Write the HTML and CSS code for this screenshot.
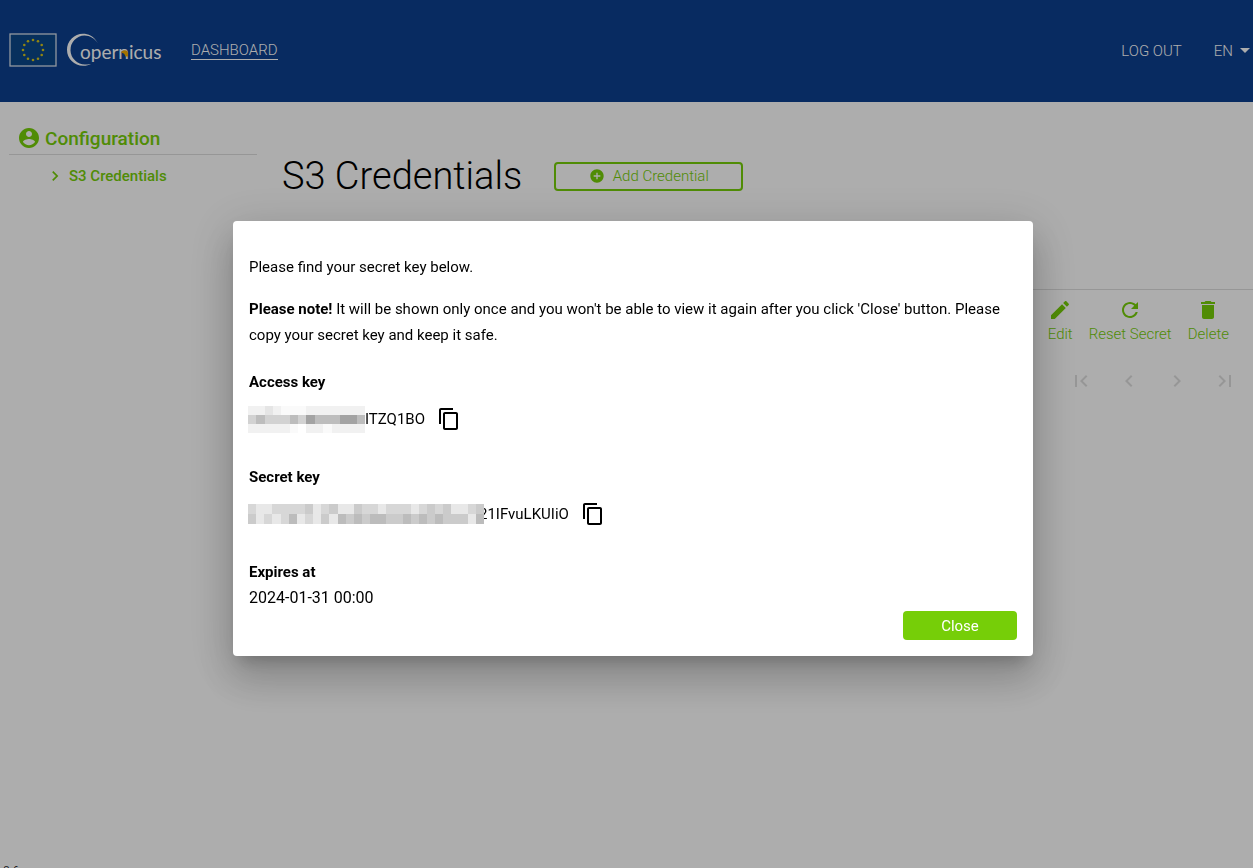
FILE: index.html
```html
<!DOCTYPE html>
<html lang="en">
<head>
<meta charset="utf-8">
<title>S3 Credentials</title>
<link rel="stylesheet" href="styles.css">
</head>
<body>
<header class="topbar">
  <a class="brand" href="#" aria-label="Copernicus home">
    <svg width="48" height="34" viewBox="0 0 48 34" aria-hidden="true">
      <rect x="1" y="1" width="46" height="32" fill="#0b4789" stroke="#d8e0ec" stroke-width="1.3"/>
      <g fill="#d6c51c">
        <circle cx="24" cy="7" r="1.3"/><circle cx="29" cy="8.300" r="1.3"/><circle cx="32.700" cy="12" r="1.3"/>
        <circle cx="34" cy="17" r="1.3"/><circle cx="32.700" cy="22" r="1.3"/><circle cx="29" cy="25.700" r="1.3"/>
        <circle cx="24" cy="27" r="1.3"/><circle cx="19" cy="25.700" r="1.3"/><circle cx="15.300" cy="22" r="1.3"/>
        <circle cx="14" cy="17" r="1.3"/><circle cx="15.300" cy="12" r="1.3"/><circle cx="19" cy="8.300" r="1.3"/>
      </g>
    </svg>
    <svg width="96" height="34" viewBox="0 0 96 34" aria-hidden="true">
      <path d="M31 10.500C27 3 21 .800 16 .800A16 16 0 0 0 16 32.800C19.500 32.800 22 32.200 24 31C22.500 31.400 20.500 31.600 18.500 31.400A14.500 14.500 0 0 1 17.500 2.400C23 2.400 28 5.500 31 10.500Z" fill="#fff"/>
      <text class="brand-text" x="13" y="26">opernicus</text>
      <path d="M54 19.500C56 16.500 61 16.500 61 20.500V23.500H58.500C58 21 56.500 20 54 19.500Z" fill="#f0a800"/>
    </svg>
  </a>
  <nav class="nav">
    <a class="nav-link current" href="#">DASHBOARD</a>
    <a class="nav-link logout" href="#">LOG OUT</a>
    <button class="language" type="button">EN<span class="caret"></span></button>
  </nav>
</header>

<div class="page">
  <aside class="sidebar">
    <h2 class="side-title">
      <svg class="icon" viewBox="0 0 24 24" aria-hidden="true"><path d="M12 2C6.480 2 2 6.480 2 12s4.480 10 10 10 10-4.480 10-10S17.520 2 12 2zm0 3c1.660 0 3 1.340 3 3s-1.340 3-3 3-3-1.340-3-3 1.340-3 3-3zm0 14.200c-2.500 0-4.710-1.280-6-3.220.030-1.990 4-3.080 6-3.080 1.990 0 5.970 1.090 6 3.080-1.290 1.940-3.500 3.220-6 3.220z"/></svg>
      Configuration
    </h2>
    <a class="side-link" href="#">
      <svg class="icon-chevron" viewBox="0 0 24 24" aria-hidden="true"><path d="M10 6L8.590 7.410 13.170 12l-4.580 4.590L10 18l6-6z"/></svg>
      S3 Credentials
    </a>
  </aside>
  <main class="content">
    <div class="heading">
      <h1 class="title">S3 Credentials</h1>
      <button class="add" type="button">
        <svg class="icon-small" viewBox="0 0 24 24" aria-hidden="true"><path d="M12 2C6.480 2 2 6.480 2 12s4.480 10 10 10 10-4.480 10-10S17.520 2 12 2zm5 11h-4v4h-2v-4H7v-2h4V7h2v4h4v2z"/></svg>
        Add Credential
      </button>
    </div>
    <div class="actions">
      <button class="action" type="button">
        <svg class="icon" viewBox="0 0 24 24" aria-hidden="true"><path d="M3 17.250V21h3.750L17.810 9.940l-3.750-3.750L3 17.250zM20.710 7.040c.390-.390.390-1.020 0-1.410l-2.340-2.340c-.390-.390-1.020-.390-1.410 0l-1.830 1.830 3.750 3.750 1.830-1.830z"/></svg>
        Edit
      </button>
      <button class="action" type="button">
        <svg class="icon" viewBox="0 0 24 24" aria-hidden="true"><path d="M17.650 6.350C16.200 4.900 14.210 4 12 4c-4.420 0-7.990 3.580-7.990 8s3.570 8 7.990 8c3.730 0 6.840-2.550 7.730-6h-2.080c-.820 2.330-3.040 4-5.650 4-3.310 0-6-2.690-6-6s2.690-6 6-6c1.660 0 3.140.690 4.220 1.780L13 11h7V4l-2.350 2.350z"/></svg>
        Reset Secret
      </button>
      <button class="action" type="button">
        <svg class="icon" viewBox="0 0 24 24" aria-hidden="true"><path d="M6 19c0 1.100.9 2 2 2h8c1.100 0 2-.9 2-2V7H6v12zM19 4h-3.500l-1-1h-5l-1 1H5v2h14V4z"/></svg>
        Delete
      </button>
    </div>
    <div class="pager">
      <button class="page-button" type="button" aria-label="First page" disabled><svg class="icon" viewBox="0 0 24 24"><path d="M18.410 16.590L13.820 12l4.590-4.590L17 6l-6 6 6 6zM6 6h2v12H6z"/></svg></button>
      <button class="page-button" type="button" aria-label="Previous page" disabled><svg class="icon" viewBox="0 0 24 24"><path d="M15.410 7.410L14 6l-6 6 6 6 1.410-1.410L10.830 12z"/></svg></button>
      <button class="page-button" type="button" aria-label="Next page" disabled><svg class="icon" viewBox="0 0 24 24"><path d="M10 6L8.590 7.410 13.170 12l-4.580 4.590L10 18l6-6z"/></svg></button>
      <button class="page-button" type="button" aria-label="Last page" disabled><svg class="icon" viewBox="0 0 24 24"><path d="M5.590 7.410L10.180 12l-4.590 4.590L7 18l6-6-6-6zM16 6h2v12h-2z"/></svg></button>
    </div>
  </main>
</div>
<footer class="footer">0.6</footer>

<div class="overlay">
  <section class="dialog" role="dialog" aria-modal="true" aria-label="Secret key">
    <p class="text">Please find your secret key below.</p>
    <p class="text"><strong>Please note!</strong> It will be shown only once and you won't be able to view it again after you click 'Close' button. Please copy your secret key and keep it safe.</p>
    <h3 class="label">Access key</h3>
    <div class="key">
      <svg class="mask" width="117" height="27" viewBox="0 0 14 3" preserveAspectRatio="none" shape-rendering="crispEdges" aria-hidden="true">
        <path fill="#f1f1f1" d="M0 0h14v1H0zM0 2h6v1H0zM7 2h7v1H7z"/>
        <path fill="#e5e5e5" d="M2 0h1v1H2z"/>
        <path fill="#fafafa" d="M4 0h3v1H4zM5 2h1v1H5zM9 2h1v1H9z"/>
        <path fill="#d2d2d2" d="M0 1h7v1H0z"/>
        <path fill="#bdbdbd" d="M1 1h1v1H1zM5 1h1v1H5zM8 1h3v1H8zM13 1h1v1h-1z"/>
        <path fill="#a3a3a3" d="M7 1h1v1H7zM11 1h2v1h-2z"/>
      </svg>
      <span>ITZQ1BO</span>
      <button class="copy" type="button" aria-label="Copy access key"><svg class="icon" viewBox="0 0 24 24"><path d="M16 1H4c-1.100 0-2 .9-2 2v14h2V3h12V1zm3 4H8c-1.100 0-2 .9-2 2v14c0 1.100.9 2 2 2h11c1.100 0 2-.9 2-2V7c0-1.100-.9-2-2-2zm0 16H8V7h11v14z"/></svg></button>
    </div>
    <h3 class="label">Secret key</h3>
    <div class="key">
      <svg class="mask mask-over" width="236" height="20" viewBox="0 0 29 2" preserveAspectRatio="none" shape-rendering="crispEdges" aria-hidden="true">
        <path fill="#d7d7d7" d="M0 0h29v2H0z"/>
        <path fill="#e8e8e8" d="M1 0h1v2H1zM2 0h1v1H2zM8 0h1v1H8zM11 0h2v1h-2zM16 0h1v1h-1zM20 0h1v1h-1zM25 0h2v1h-2zM3 1h1v1H3zM6 1h1v1H6zM8 1h1v1H8zM10 1h1v1h-1zM27 1h1v1h-1z"/>
        <path fill="#cbcbcb" d="M0 1h1v1H0zM7 0h1v1H7zM10 0h1v1h-1zM13 0h1v1h-1zM22 0h1v1h-1zM24 0h1v1h-1zM28 0h1v1h-1zM9 1h1v1H9zM12 1h15v1H12z"/>
        <path fill="#bcbcbc" d="M5 1h1v1H5zM11 1h1v1h-1zM13 1h1v1h-1zM15 1h2v1h-2zM19 1h1v1h-1zM21 1h1v1h-1zM23 1h1v1h-1zM28 1h1v1h-1z"/>
      </svg>
      <span>21IFvuLKUIiO</span>
      <button class="copy" type="button" aria-label="Copy secret key"><svg class="icon" viewBox="0 0 24 24"><path d="M16 1H4c-1.100 0-2 .9-2 2v14h2V3h12V1zm3 4H8c-1.100 0-2 .9-2 2v14c0 1.100.9 2 2 2h11c1.100 0 2-.9 2-2V7c0-1.100-.9-2-2-2zm0 16H8V7h11v14z"/></svg></button>
    </div>
    <h3 class="label">Expires at</h3>
    <div class="expiry">2024-01-31 00:00</div>
    <button class="close" type="button">Close</button>
  </section>
</div>
</body>
</html>
```
FILE: styles.css
```css
* { box-sizing: border-box; }
body {
  margin: 0;
  height: 100vh;
  overflow: hidden;
  background: #fff;
  color: #000;
  font: 15px/26px Roboto, sans-serif;
}
button { font: inherit; border: 0; padding: 0; background: none; cursor: pointer; }
h1, h2, h3, p { margin: 0; }
a { text-decoration: none; }
.icon { width: 24px; height: 24px; fill: currentColor; flex: none; }
.icon-small { width: 16px; height: 16px; fill: currentColor; flex: none; }
.icon-chevron { width: 20px; height: 20px; fill: currentColor; flex: none; }

.topbar {
  display: flex;
  align-items: center;
  height: 102px;
  padding: 0 3px 2px 9px;
  background: #0c408f;
}
.brand { display: flex; align-items: center; gap: 10px; }
.brand-text { font: 19px Lato, sans-serif; fill: #fff; }
.nav { display: flex; align-items: center; flex: 1; margin-left: 28px; padding-top: 1px; font-size: 15px; font-weight: 300; }
.nav-link { color: #fff; line-height: 18px; }
.current { border-bottom: 1px solid #fff; }
.logout { margin-left: auto; }
.language { display: flex; align-items: center; gap: 7px; margin-left: 32px; color: #fff; }
.caret { border: 5px solid transparent; border-top-color: #fff; border-bottom: 0; }

.page { display: flex; min-height: calc(100vh - 106px); }
.sidebar { width: 257px; padding: 24px 0 0 9px; color: #76ce08; }
.side-title {
  display: flex;
  align-items: center;
  gap: 4px;
  padding: 0 0 2px 8px;
  border-bottom: 1px solid #dedede;
  font-size: 19px;
  font-weight: 500;
  line-height: 24px;
}
.side-title .icon { margin-bottom: 2px; }
.side-link {
  display: flex;
  align-items: center;
  gap: 4px;
  padding: 8px 0 0 36px;
  color: inherit;
  font-size: 15px;
  font-weight: 500;
}
.content { flex: 1; padding-top: 42px; }
.heading { display: flex; align-items: center; gap: 32px; padding-left: 25px; height: 64px; }
.title { font-size: 38px; font-weight: 300; line-height: 64px; }
.add {
  display: flex;
  align-items: center;
  justify-content: center;
  gap: 8px;
  width: 189px;
  height: 29px;
  border: 2px solid #76ce08;
  border-radius: 4px;
  color: #76ce08;
  font-size: 15px;
  font-weight: 300;
}
.actions {
  display: flex;
  justify-content: flex-end;
  gap: 16px;
  margin-top: 81px;
  padding: 8px 24px 0 0;
  border-top: 1px solid #dedede;
}
.action {
  display: flex;
  flex-direction: column;
  align-items: center;
  color: #76ce08;
  font-size: 15px;
  font-weight: 300;
  line-height: 24px;
}
.pager { display: flex; justify-content: flex-end; padding: 11px 4px 0 0; }
.page-button { display: grid; place-items: center; width: 48px; height: 48px; color: #dedede; }
.footer { padding-left: 3px; font-size: 12px; line-height: 14px; font-weight: 300; }

.overlay {
  position: fixed;
  inset: 0;
  display: flex;
  align-items: center;
  justify-content: center;
  padding: 9px 0 0 13px;
  background: rgba(0, 0, 0, .32);
}
.dialog {
  display: flex;
  flex-direction: column;
  width: 800px;
  padding: 33px 16px 16px;
  border-radius: 4px;
  background: #fff;
  box-shadow: 0 11px 15px -7px rgba(0, 0, 0, .2), 0 24px 38px 3px rgba(0, 0, 0, .14), 0 9px 46px 8px rgba(0, 0, 0, .12);
}
.text { margin-bottom: 16px; }
.label { margin-top: 5px; font-size: 15px; font-weight: 700; line-height: 26px; }
.key { display: flex; align-items: center; height: 48px; margin: 0 0 16px -1px; }
.mask { z-index: 1; }
.mask-over { margin-right: -5px; }
.copy { display: grid; place-items: center; margin-left: 12px; }
.expiry { font-size: 16px; }
.close {
  align-self: flex-end;
  width: 114px;
  height: 29px;
  border-radius: 4px;
  background: #76ce08;
  color: #fff;
}
```
